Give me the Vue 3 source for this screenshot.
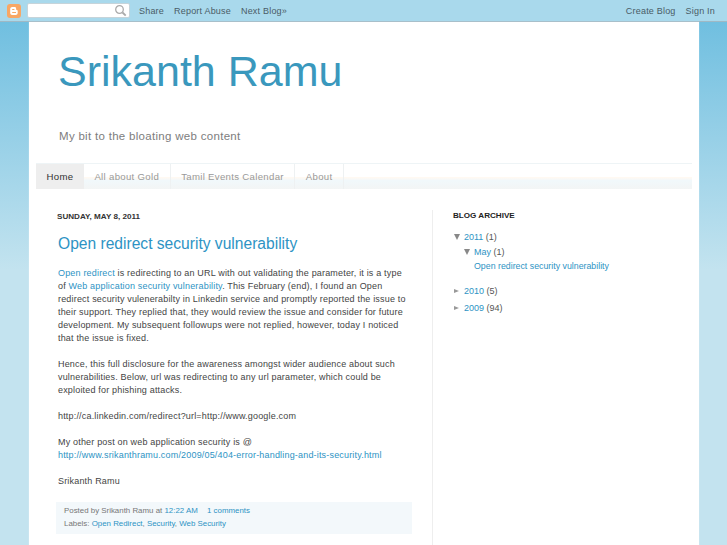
<script setup>
const tabs = [
  { label: 'Home', active: true },
  { label: 'All about Gold' },
  { label: 'Tamil Events Calendar' },
  { label: 'About' },
]
</script>

<template>
  <div class="page">
    <div class="navbar">
      <div class="logo"><svg width="14" height="14" viewBox="0 0 14 14"><path d="M5.200 3h2.400c.9 0 1.500.6 1.500 1.300v1c0 .5.300.7.700.7.500 0 .9.300.9.800V9c0 1.200-.9 2-2 2H5.200c-1.100 0-2-.8-2-2V5c0-1.100.9-2 2-2z" fill="#fff"/><rect x="5.200" y="5" width="2.200" height="1" fill="#f8a765"/><rect x="5.200" y="8" width="3.800" height="1" fill="#f8a765"/></svg></div>
      <div class="searchbox">
        <svg width="13" height="13" viewBox="0 0 13 13"><circle cx="5.500" cy="5.500" r="3.800" fill="none" stroke="#aaa" stroke-width="1.300"/><path d="M8.500 8.500l3.200 3.200" stroke="#aaa" stroke-width="1.800"/></svg>
      </div>
      <a class="barlink first">Share</a>
      <a class="barlink">Report Abuse</a>
      <a class="barlink">Next Blog»</a>
      <span class="spacer"></span>
      <a class="barlink">Create Blog</a>
      <a class="barlink">Sign In</a>
    </div>

    <div class="content">
      <header class="head">
        <h1>Srikanth Ramu</h1>
        <p>My bit to the bloating web content</p>
      </header>

      <nav class="tabs">
        <a v-for="t in tabs" :key="t.label" :class="{ active: t.active }">{{ t.label }}</a>
      </nav>

      <div class="columns">
        <main class="main">
          <h2 class="date">SUNDAY, MAY 8, 2011</h2>
          <h3 class="title">Open redirect security vulnerability</h3>
          <div class="body">
            <a>Open redirect</a> is redirecting to an URL with out validating the parameter, it is a type<br>
            of <a>Web application security vulnerability</a>. This February (end), I found an Open<br>
            redirect security vulenerabilty in Linkedin service and promptly reported the issue to<br>
            their support. They replied that, they would review the issue and consider for future<br>
            development. My subsequent followups were not replied, however, today I noticed<br>
            that the issue is fixed.<br><br>
            Hence, this full disclosure for the awareness amongst wider audience about such<br>
            vulnerabilities. Below, url was redirecting to any url parameter, which could be<br>
            exploited for phishing attacks.<br><br>
            http://ca.linkedin.com/redirect?url=http://www.google.com<br><br>
            My other post on web application security is @<br>
            <a>http://www.srikanthramu.com/2009/05/404-error-handling-and-its-security.html</a><br><br>
            Srikanth Ramu
          </div>
          <div class="footer">
            <div>Posted by Srikanth Ramu at <a>12:22 AM</a> <a class="comments">1 comments</a></div>
            <div>Labels: <a>Open Redirect</a>, <a>Security</a>, <a>Web Security</a></div>
          </div>
        </main>

        <aside class="side">
          <h2>BLOG ARCHIVE</h2>
          <div class="arch"><span class="open"></span><a>2011</a> (1)</div>
          <div class="arch sub"><span class="open"></span><a>May</a> (1)</div>
          <div class="arch leaf"><a>Open redirect security vulnerability</a></div>
          <div class="arch gap"><span class="shut"></span><a>2010</a> (5)</div>
          <div class="arch gap2"><span class="shut"></span><a>2009</a> (94)</div>
        </aside>
      </div>
    </div>
  </div>
</template>

<style>
html, body { margin: 0; height: 100%; overflow: hidden; }
</style>

<style scoped>
.page {
  height: 545px;
  overflow: hidden;
  font-family: "Liberation Sans", Arial, sans-serif;
  background: linear-gradient(#70bfe0 22px, #c3e3ef 270px);
}
a { color: #2d93c4; }

.navbar {
  display: flex;
  align-items: center;
  height: 21px;
  padding: 0 12px 0 7px;
  background: #a9d9ec;
  border-bottom: 1px solid #9fb8c4;
  font-size: 9px;
  letter-spacing: 0.200px;
}
.logo {
  width: 14px;
  height: 14px;
  border-radius: 3px;
  background: #f8a765;
}
.searchbox {
  display: flex;
  justify-content: flex-end;
  align-items: center;
  box-sizing: border-box;
  width: 103px;
  height: 15px;
  margin-left: 6px;
  padding-right: 2px;
  background: #fff;
  border: 1px solid #c6d4da;
  border-radius: 2px;
}
.barlink { color: #4a5c66; margin-left: 10px; }
.barlink.first { margin-left: 9px; }
.spacer { flex: 1; }

.content {
  box-sizing: border-box;
  width: 670px;
  height: 523px;
  margin-left: 29px;
  padding: 0 7px;
  background: #fff;
  box-shadow: 0 0 1px rgba(255, 255, 255, 0.6);
}
.head { height: 141px; overflow: hidden; padding-left: 22px; }
.head h1 {
  margin: 23px 0 0;
  font-size: 43px;
  font-weight: normal;
  line-height: 52px;
  color: #3a98bd;
}
.head p {
  margin: 32px 0 0 1px;
  font-size: 11.500px;
  line-height: 15px;
  color: #7d7d7d;
  letter-spacing: 0.300px;
}

.tabs {
  display: flex;
  height: 26px;
  box-sizing: border-box;
  border-top: 1px solid #eef4f6;
  background: linear-gradient(#fff 0, #fff 50%, #fff9f2 54%, #f1f8fb 66%, #f3f5f5 100%);
}
.tabs a {
  padding: 0 10.500px;
  line-height: 25px;
  font-size: 9.600px;
  letter-spacing: 0.320px;
  color: #999;
  border-right: 1px solid #eef1f2;
}
.tabs a.active { background: #eee; color: #333; border-right: 0; }

.columns { display: flex; }
.main { width: 396px; padding: 21px 0 0 21px; box-sizing: border-box; flex: none; }
.date {
  margin: 1px 0 0;
  font-size: 8.100px;
  line-height: 11px;
  font-weight: bold;
  color: #333;
}
.title {
  margin: 11px 0 0 1px;
  font-size: 15.600px;
  line-height: 22px;
  font-weight: normal;
  color: #2d93c4;
}
.body {
  margin: 12px 0 0 1px;
  font-size: 9px;
  line-height: 13px;
  letter-spacing: 0.180px;
  white-space: nowrap;
  color: #444;
}
.footer {
  box-sizing: border-box;
  margin: 14px 0 0 -1px;
  padding: 2px 8px 0;
  width: 356px;
  height: 32px;
  background: #f3f8fb;
  font-size: 7.900px;
  line-height: 13px;
  color: #777;
}
.comments { margin-left: 7px; }

.side {
  margin: 21px 0 0 0;
  padding: 0 0 0 20px;
  height: 340px;
  border-left: 1px solid #eee;
  font-size: 9px;
  color: #555;
}
.side h2 {
  margin: 0 0 9px;
  font-size: 8.100px;
  line-height: 11px;
  font-weight: bold;
  color: #222;
}
.arch { display: flex; align-items: center; line-height: 14.500px; white-space: pre; }
.open, .shut { flex: none; width: 0; height: 0; border-style: solid; border-color: transparent; }
.open { margin: 0 4px 0 1px; border-width: 6px 3.500px 0; border-top-color: #888; }
.shut { margin: 0 5px 0 1px; border-width: 2.500px 0 2.500px 5.500px; border-left-color: #999; }
.sub { margin-left: 10px; }
.leaf { margin-left: 21px; font-size: 8.800px; }
.gap { margin-top: 10px; }
.gap2 { margin-top: 2.500px; }
</style>
